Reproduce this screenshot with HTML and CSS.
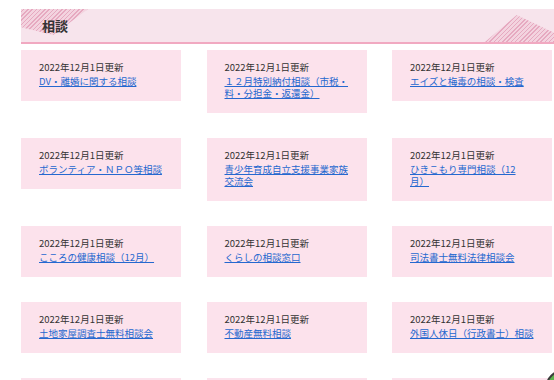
FILE: index.html
```html
<!DOCTYPE html>
<html lang="ja">
<head>
<meta charset="utf-8">
<title>相談</title>
<link rel="stylesheet" href="styles.css">
</head>
<body>
<div class="page">
  <h2 class="section-title">
    <span class="deco deco-left" aria-hidden="true"></span>
    <span class="title-text">相談</span>
    <span class="deco deco-right" aria-hidden="true"></span>
  </h2>
  <ul class="cards">
    <li class="card"><p class="date">2022年12月1日更新</p><a class="link" href="#">DV・離婚に関する相談</a></li>
    <li class="card"><p class="date">2022年12月1日更新</p><a class="link" href="#">１２月特別納付相談（市税・料・分担金・返還金）</a></li>
    <li class="card"><p class="date">2022年12月1日更新</p><a class="link" href="#">エイズと梅毒の相談・検査</a></li>
    <li class="card"><p class="date">2022年12月1日更新</p><a class="link" href="#">ボランティア・ＮＰＯ等相談</a></li>
    <li class="card"><p class="date">2022年12月1日更新</p><a class="link" href="#">青少年育成自立支援事業家族交流会</a></li>
    <li class="card"><p class="date">2022年12月1日更新</p><a class="link" href="#">ひきこもり専門相談（12月）</a></li>
    <li class="card"><p class="date">2022年12月1日更新</p><a class="link" href="#">こころの健康相談（12月）</a></li>
    <li class="card"><p class="date">2022年12月1日更新</p><a class="link" href="#">くらしの相談窓口</a></li>
    <li class="card"><p class="date">2022年12月1日更新</p><a class="link" href="#">司法書士無料法律相談会</a></li>
    <li class="card"><p class="date">2022年12月1日更新</p><a class="link" href="#">土地家屋調査士無料相談会</a></li>
    <li class="card"><p class="date">2022年12月1日更新</p><a class="link" href="#">不動産無料相談</a></li>
    <li class="card"><p class="date">2022年12月1日更新</p><a class="link" href="#">外国人休日（行政書士）相談</a></li>
    <li class="card"><p class="date">2022年11月1日更新</p><a class="link" href="#">女性のための相談</a></li>
    <li class="card"><p class="date">2022年11月1日更新</p><a class="link" href="#">消費生活相談</a></li>
    <li class="card"><p class="date">2022年11月1日更新</p><a class="link" href="#">行政相談</a></li>
  </ul>
</div>
<a class="pagetop" href="#" aria-label="ページの先頭へ"></a>
</body>
</html>
```

FILE: styles.css
```css
html, body {
  margin: 0;
  padding: 0;
  background: #ffffff;
  overflow: hidden;
}

body {
  font-family: "Noto Sans CJK JP", "Noto Sans", sans-serif;
  color: #333333;
  text-spacing-trim: space-all;
}

.page {
  padding: 9px 0 0 21px;
}

.section-title {
  position: relative;
  margin: 0;
  height: 33px;
  width: 533px;
  background: #f7e4ec;
  border-bottom: 2px solid #f1a9c1;
  display: flex;
  align-items: center;
  padding-left: 21px;
  box-sizing: content-box;
  overflow: hidden;
}

.deco {
  position: absolute;
  display: block;
  background: repeating-linear-gradient(-45deg, #e6a9c0 0 1px, #f3d3df 1px 3px);
}

.deco-left {
  left: 0;
  top: 0;
  width: 67px;
  height: 26px;
  clip-path: polygon(0 0, 100% 0, 48% 100%, 0 70%);
}

.deco-right {
  right: 21px;
  bottom: 0;
  width: 69px;
  height: 27px;
  clip-path: polygon(0 100%, 46% 0, 100% 66%, 100% 100%);
}

.title-text {
  position: relative;
  font-size: 13px;
  font-weight: bold;
  line-height: 1;
  color: #333333;
}

.cards {
  list-style: none;
  margin: 6px 0 0 0;
  padding: 0;
  display: grid;
  grid-template-columns: repeat(3, 160px);
  column-gap: 25.5px;
  row-gap: 25px;
  align-items: start;
}

.card {
  background: #fce2ec;
  padding: 10px 18px 14px 18px;
  font-size: 9.5px;
}

.date {
  margin: 0;
  line-height: 15px;
  color: #333333;
}

.link {
  display: block;
  line-height: 12px;
  color: #2568cf;
  text-decoration: underline;
}

.pagetop {
  position: fixed;
  left: 545px;
  top: 369px;
  width: 36px;
  height: 36px;
  border-radius: 50%;
  background: #5ab34a;
  border: 2px solid #3b3b3b;
}
```
